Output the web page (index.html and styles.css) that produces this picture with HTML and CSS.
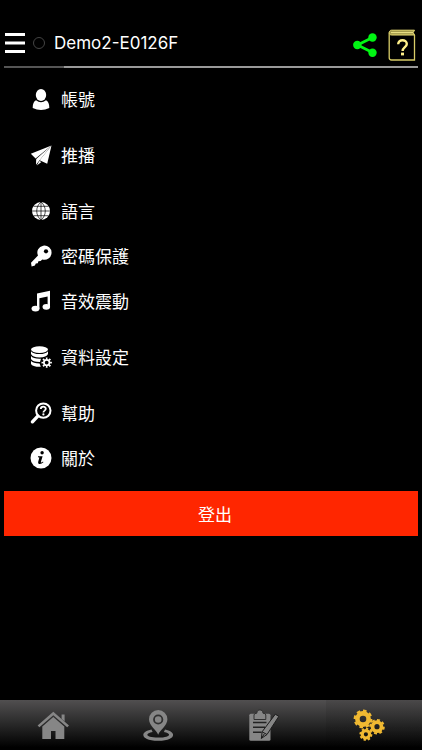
FILE: index.html
```html
<!DOCTYPE html>
<html lang="zh-Hant">

<head>
    <meta charset="UTF-8">
    <meta name="viewport" content="width=device-width, initial-scale=1.0">
    <title>設定</title>

    <link rel="stylesheet" href="styles.css">
</head>

<body>

    <!-- 頂部標題列 -->
    <header class="header">
        <button class="icon-btn" type="button" aria-label="選單">
            <svg width="20" height="22" viewBox="0 0 20 22">
                <path d="M0 2.5H20M0 11H20M0 19.5H20" stroke="#fff" stroke-width="3" />
            </svg>
        </button>
        <span class="status"></span>
        <h1 class="title">Demo2-E0126F</h1>
        <div class="actions">
            <button class="icon-btn" type="button" aria-label="分享">
                <svg width="24" height="24" viewBox="0 0 24 24" fill="#00f513">
                    <path d="M19.5 4.5L4.5 12L19.5 19.5" fill="none" stroke="#00f513" stroke-width="2.8" />
                    <circle cx="4.3" cy="12" r="4.2" />
                    <circle cx="19.5" cy="4.5" r="4.2" />
                    <circle cx="19.5" cy="19.7" r="4.2" />
                </svg>
            </button>
            <button class="icon-btn" type="button" aria-label="說明">
                <svg width="28" height="32" viewBox="0 0 28 32">
                    <path d="M3.5 1.2H26.5L25.2 3.6L26.5 6H3.5C.5 6 .5 1.2 3.5 1.2Z" fill="#a39a4c" stroke="#e8dc75" />
                    <path d="M3 3.6H25" stroke="#eee48a" />
                    <path d="M1.2 3.5V28.5Q1.2 31 3.5 31H26.5V6" fill="none" stroke="#d8cc67" stroke-width="1.3" />
                    <path d="M10.2 15.3C10.2 9.8 18.8 10 18.8 14.9C18.8 18 14.6 18.2 14.6 22" fill="none" stroke="#fff08a" stroke-width="2.4" />
                    <rect x="13" y="23.6" width="3" height="2.8" fill="#fff08a" />
                </svg>
            </button>
        </div>
    </header>

    <!-- 進度條 -->
    <div class="progress"><div class="progress-bar"></div></div>

    <!-- 設定選單 -->
    <main class="main">
        <ul class="group">
            <li><a class="item" href="#account">
                <svg class="item-icon" viewBox="0 0 24 24">
                    <ellipse cx="12" cy="8" rx="5.2" ry="6" />
                    <path d="M7 13.2Q12 17.4 17 13.2Q20.4 14.8 20.3 21Q12 25.2 3.7 21Q3.6 14.8 7 13.2Z" />
                </svg>
                帳號
            </a></li>
        </ul>
        <ul class="group">
            <li><a class="item" href="#push">
                <svg class="item-icon" viewBox="0 0 24 24">
                    <path d="M22.5 2.6L1.8 10.8L6.6 15.6Z" />
                    <path d="M22.5 2.6L7.2 16L7 21.8L10.4 17.4Z" />
                    <path d="M22.5 2.6L10.6 17.2L18.2 20.8Z" />
                    <path d="M10.3 18L7.8 22.4L12.4 19Z" />
                </svg>
                推播
            </a></li>
        </ul>
        <ul class="group">
            <li><a class="item" href="#language">
                <svg class="item-icon" viewBox="0 0 24 24">
                    <circle cx="12" cy="12" r="9" />
                    <path d="M12 3V21M3 12H21M4.8 7.3H19.2M4.8 16.7H19.2M12 3C6.3 7.5 6.3 16.5 12 21C17.7 16.5 17.7 7.5 12 3" fill="none" stroke="#000" stroke-width=".7" />
                </svg>
                語言
            </a></li>
            <li><a class="item" href="#password">
                <svg class="item-icon" viewBox="0 0 24 24">
                    <path d="M9 11.6A7.1 7.1 0 1 1 13.3 15.4L11.6 17L9.4 17.3L8.8 19.2L6.8 19.6L5.9 21.6L2.6 22.4L2 18.8Z" />
                    <circle cx="17" cy="7.3" r="2.1" fill="#000" />
                </svg>
                密碼保護
            </a></li>
            <li><a class="item" href="#sound">
                <svg class="item-icon" viewBox="0 0 24 24">
                    <path d="M8 4.5L21 1.8V18H18.6V7.6L10.4 9.3V19.5H8Z" />
                    <ellipse cx="6.5" cy="19.6" rx="4" ry="2.9" />
                    <ellipse cx="17.3" cy="17.8" rx="3.8" ry="2.9" />
                </svg>
                音效震動
            </a></li>
        </ul>
        <ul class="group">
            <li><a class="item" href="#data">
                <svg class="item-icon" viewBox="0 0 24 24">
                    <ellipse cx="10.5" cy="4.6" rx="8.5" ry="3.4" />
                    <path d="M2 6.2Q4 9 10.5 9Q17 9 19 6.2V9Q17.5 12.4 10.5 12.4Q3.5 12.4 2 9Z" />
                    <path d="M2 11Q4 13.8 10.5 13.8L12 13.7L11 17H10.5Q3.5 17 2 14Z" />
                    <path d="M2 16Q4 18.4 10.6 18.4L11.8 21.8Q3.5 22 2 19Z" />
                    <circle cx="17.7" cy="17.6" r="5.8" fill="#000" />
                    <circle cx="17.7" cy="17.6" r="2.8" fill="none" stroke="#fff" stroke-width="1.8" />
                    <circle cx="17.7" cy="17.6" r="4.3" fill="none" stroke="#fff" stroke-width="1.8" pathLength="32" stroke-dasharray="2 2" stroke-dashoffset="1" />
                </svg>
                資料設定
            </a></li>
        </ul>
        <ul class="group">
            <li><a class="item" href="#help">
                <svg class="item-icon" viewBox="0 0 24 24">
                    <circle cx="14.3" cy="9.6" r="7.2" fill="none" stroke="#fff" stroke-width="2" />
                    <path d="M8.8 15.1L3.4 20.8" fill="none" stroke="#fff" stroke-width="3.4" stroke-linecap="round" />
                    <path d="M11.8 8C11.8 4.9 16.8 4.9 16.8 7.8C16.8 9.8 14.4 9.5 14.4 11.6" fill="none" stroke="#fff" stroke-width="1.8" />
                    <circle cx="14.4" cy="13.4" r="1.1" />
                </svg>
                幫助
            </a></li>
            <li><a class="item" href="#about">
                <svg class="item-icon" viewBox="0 0 24 24">
                    <circle cx="12" cy="12" r="10.5" />
                    <circle cx="13.1" cy="6.8" r="1.7" fill="#000" />
                    <path d="M9 10.2H13.6L11.8 16.3Q12.6 16.8 14 15.6L14.4 16.3Q12.2 18.6 9.9 18Q8.7 17.4 9.2 15.8L10.4 11.4L9 11.2Z" fill="#000" />
                </svg>
                關於
            </a></li>
        </ul>

        <button class="logout" type="button">登出</button>
    </main>

    <!-- 底部導航 -->
    <nav class="tabs">
        <a class="tab" href="#home" aria-label="首頁">
            <svg class="tab-icon" viewBox="0 0 32 32">
                <path d="M24.6 5.5H27.6V12.5L24.6 9.7Z" />
                <path d="M16.3 2.8L32 16.5L30.2 18.2L16.3 6.2L2.4 18.2L.6 16.5Z" />
                <path d="M16.3 8L27.3 17.5V30H18.5V22H14V30H5.3V17.5Z" />
            </svg>
        </a>
        <a class="tab" href="#location" aria-label="位置">
            <svg class="tab-icon" viewBox="0 0 32 32">
                <path d="M9.5 20.6C-2.6 22.6-2 31.8 16.2 31.8S35 22.6 23 20.6L21.9 23C30.4 24.6 28.5 28.6 16.2 28.6S2 24.6 10.6 23Z" />
                <path d="M16.2 25.8C14.6 21.5 7 16.4 7 10.3A9.2 9.2 0 0 1 25.4 10.3C25.4 16.4 17.8 21.5 16.2 25.8Z" />
                <circle cx="16.2" cy="10.5" r="4.2" fill="none" stroke="#303030" stroke-width="1.8" />
            </svg>
        </a>
        <a class="tab" href="#records" aria-label="紀錄">
            <svg class="tab-icon" viewBox="0 0 32 32">
                <rect x="1.3" y="4.8" width="21.2" height="27" rx="1.5" />
                <path d="M6 10.5V6Q6 4.3 8.8 4.2C8.8-.2 15-.2 15 4.2Q17.8 4.3 17.8 6V10.5Z" stroke="#303030" />
                <path d="M5 13.5H18.5M5 18.3H17M5 23.3H13.5" stroke="#222" stroke-width="1.6" />
                <path d="M27.3 5.2L30.8 7.4L19 25.5L13.4 29.4L14.1 22.8Z" stroke="#1c1c1c" />
                <path d="M14.1 22.8L19 25.5M13.4 29.4L16.4 24.8" stroke="#1c1c1c" />
            </svg>
        </a>
        <a class="tab active" href="#settings" aria-label="設定">
            <svg class="tab-icon gears" viewBox="0 0 32 32">
                <circle cx="10" cy="10" r="5.6" stroke-width="4.6" />
                <circle cx="10" cy="10" r="8.3" stroke-width="2.2" pathLength="32" stroke-dasharray="2.2 1.8" />
                <circle cx="24" cy="17.7" r="4.5" stroke-width="3.8" />
                <circle cx="24" cy="17.7" r="6.8" stroke-width="2" pathLength="32" stroke-dasharray="2.2 1.8" />
                <circle cx="12.9" cy="25.3" r="3.7" stroke-width="3.2" />
                <circle cx="12.9" cy="25.3" r="5.6" stroke-width="1.8" pathLength="32" stroke-dasharray="2.2 1.8" />
            </svg>
        </a>
    </nav>

</body>

</html>
```

FILE: styles.css
```css
* {
    margin: 0;
    padding: 0;
    box-sizing: border-box;
}

body {
    /* 讓底部導航貼齊視窗底部 */
    display: flex;
    flex-direction: column;
    min-height: 100vh;
    background-color: #000;
    color: #fff;
    font-family: "Inter", "Noto Sans CJK TC", sans-serif;
    font-size: 17px;
}

a {
    color: inherit;
    text-decoration: none;
}

ul {
    list-style: none;
}

button {
    border: none;
    background: none;
    color: inherit;
    font: inherit;
    cursor: pointer;
}

svg {
    display: block;
}

/* 標題列，上方預留狀態列空間 */
.header {
    display: flex;
    align-items: center;
    height: 66px;
    padding: 20px 6px 0 5px;
}

.status {
    width: 12px;
    height: 12px;
    margin: 0 9px 0 8px;
    border: 1px solid #444;
    border-radius: 50%;
}

.title {
    flex: 1;
    font-size: 17px;
    font-weight: 400;
}

/* 右側按鈕 */
.actions {
    display: flex;
    align-items: center;
    gap: 11px;
    padding-top: 4px;
}

/* 進度條 */
.progress {
    height: 2px;
    margin: 0 4px;
    background-color: #999;
}

.progress-bar {
    width: 60px;
    height: 2px;
    background-color: #555;
}

.main {
    flex: 1;
    padding: 8px 4px;
}

/* 選單分組 */
.group {
    margin-bottom: 11px;
}

.item {
    display: flex;
    align-items: center;
    gap: 8px;
    height: 45px;
    padding-left: 25px;
}

.item-icon {
    width: 24px;
    height: 24px;
    fill: #fff;
}

.logout {
    width: 100%;
    height: 45px;
    padding-left: 8px;
    background-color: #ff2600;
}

/* 底部導航 */
.tabs {
    display: flex;
    height: 50px;
    background: linear-gradient(#514f50, #2b2b2b 45%, #000 95%);
}

.tab {
    flex: 1;
    display: flex;
    justify-content: center;
    align-items: center;
}

.tab.active {
    background: linear-gradient(to right, transparent 9%, rgba(0, 0, 0, 0.08) 9%);
}

.tab-icon {
    width: 32px;
    height: 32px;
    fill: #868686;
}

.gears {
    fill: none;
    stroke: #f0b932;
}
```
